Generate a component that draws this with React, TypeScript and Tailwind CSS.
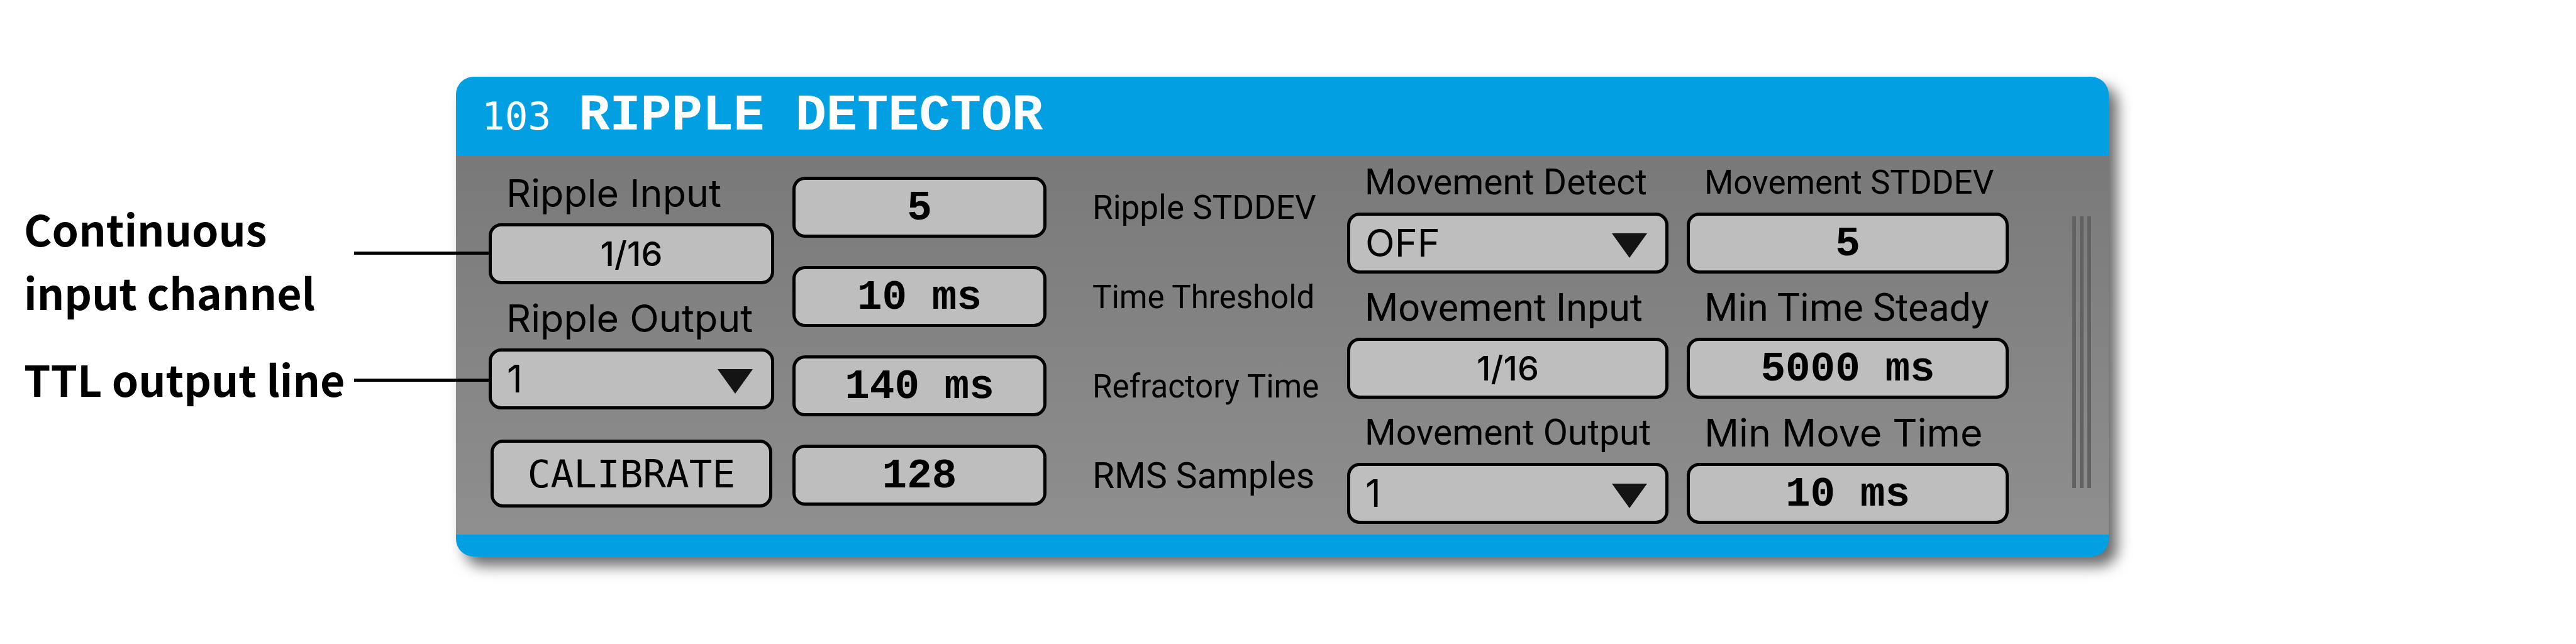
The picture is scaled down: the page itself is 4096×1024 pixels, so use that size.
import type { ReactNode } from 'react';
import { clsx } from 'clsx';

const BOX =
  'block w-full min-w-0 h-[97px] rounded-[20px] border-[5px] border-black bg-[#bebebe] text-black outline-none';
const VALUE_FONT = 'pt-[4px] font-["Liberation_Mono",monospace] font-bold text-[66px] leading-none';

function NumberBox({ id, value }: { id: string; value: string }) {
  return <input id={id} defaultValue={value} className={clsx(BOX, VALUE_FONT, 'text-center')} />;
}

function ChannelButton({ id }: { id: string }) {
  return (
    <button
      id={id}
      type="button"
      className={clsx(BOX, 'text-center font-["Inter",sans-serif] text-[54px] font-medium leading-none')}
    >
      1/16
    </button>
  );
}

function Dropdown({ id, options }: { id: string; options: string[] }) {
  return (
    <div className="relative">
      <select
        id={id}
        className={clsx(BOX, 'appearance-none pl-[24px] font-["Inter",sans-serif] text-[61px] leading-[87px]')}
      >
        {options.map((o) => (
          <option key={o}>{o}</option>
        ))}
      </select>
      <svg
        viewBox="0 0 56 39"
        className="pointer-events-none absolute right-[34px] top-[33px] h-[39px] w-[56px]"
        aria-hidden="true"
      >
        <path d="M0 0H56L28 39Z" fill="#141414" />
      </svg>
    </div>
  );
}

function Field({
  id,
  label,
  labelClass,
  children,
}: {
  id: string;
  label: string;
  labelClass: string;
  children: ReactNode;
}) {
  return (
    <div>
      <label
        htmlFor={id}
        className={clsx('mb-[5px] block h-[86px] whitespace-nowrap pl-[28px] leading-[86px]', labelClass)}
      >
        {label}
      </label>
      {children}
    </div>
  );
}

const REGULAR = 'font-["Inter",sans-serif] text-[61px]';
const NARROW_LG = 'font-["Roboto",sans-serif] text-[61px]';
const NARROW_MD = 'font-["Roboto",sans-serif] text-[57px]';
const NARROW_SM = 'font-["Roboto",sans-serif] text-[53px]';
const NARROW_XS = 'font-["Roboto",sans-serif] text-[51px]';

const DETECTION = [
  { id: 'ripple-std', label: 'Ripple STDDEV', value: '5', size: NARROW_SM },
  { id: 'time-threshold', label: 'Time Threshold', value: '10 ms', size: NARROW_XS },
  { id: 'refractory', label: 'Refractory Time', value: '140 ms', size: NARROW_XS },
  { id: 'rms', label: 'RMS Samples', value: '128', size: NARROW_MD },
];

function Callout({ className, lineClass, children }: { className?: string; lineClass: string; children: ReactNode }) {
  return (
    <div className={clsx('flex items-start', className)}>
      <p className="w-[525px] shrink-0 whitespace-nowrap font-['Noto_Sans_CJK_JP',sans-serif] text-[68px] font-semibold leading-[101px]">
        {children}
      </p>
      <span className={clsx('relative z-10 -mr-[52px] h-[5px] flex-1 bg-black', lineClass)} />
    </div>
  );
}

export default function App() {
  return (
    <main className="grid grid-cols-[725fr_2628fr_743fr] bg-white pb-[139px] pt-[122px] text-black">
      <aside className="pl-[38px] pt-[190px]">
        <Callout lineClass="mt-[88px]">
          Continuous
          <br />
          input channel
        </Callout>
        <Callout className="mt-[37px]" lineClass="mt-[51px]">
          TTL output line
        </Callout>
      </aside>

      <section className="rounded-[28px] bg-[#02a0e3] shadow-[14px_15px_22px_rgba(0,0,0,0.58)]">
        <header className="flex h-[125px] items-baseline gap-[44px] pl-[41px] leading-[125px] text-white">
          <span className="font-['DejaVu_Sans_Mono',monospace] text-[61px]">103</span>
          <h1 className="font-['Liberation_Mono',monospace] text-[82px] font-bold">RIPPLE DETECTOR</h1>
        </header>

        <div className="grid grid-cols-[454fr_404fr_420fr_511fr_512fr_102fr] gap-x-[29px] bg-linear-to-b from-[#797979] to-[#8f8f8f] pb-[17px] pl-[52px] pr-[28px]">
          <div className="flex flex-col gap-[11px] pt-[17px]">
            <Field id="ripple-in" label="Ripple Input" labelClass={REGULAR}>
              <ChannelButton id="ripple-in" />
            </Field>
            <Field id="ripple-out" label="Ripple Output" labelClass={REGULAR}>
              <Dropdown id="ripple-out" options={['1', '2', '3', '4']} />
            </Field>
            <button
              type="button"
              className="mx-[3px] mt-[37px] h-[108px] rounded-[20px] border-[5px] border-black bg-[#bebebe] font-['DejaVu_Sans_Mono',monospace] text-[61px] leading-none"
            >
              CALIBRATE
            </button>
          </div>

          <div className="flex flex-col gap-[45px] pt-[34px]">
            {DETECTION.map((d) => (
              <NumberBox key={d.id} id={d.id} value={d.value} />
            ))}
          </div>

          <div className="flex flex-col gap-[45px] pl-[44px] pt-[35px]">
            {DETECTION.map((d) => (
              <label
                key={d.id}
                htmlFor={d.id}
                className={clsx('block h-[97px] whitespace-nowrap leading-[97px]', d.size)}
              >
                {d.label}
              </label>
            ))}
          </div>

          <div className="flex flex-col gap-[11px]">
            <Field id="move-detect" label="Movement Detect" labelClass={NARROW_MD}>
              <Dropdown id="move-detect" options={['OFF', 'ON']} />
            </Field>
            <Field id="move-in" label="Movement Input" labelClass={NARROW_LG}>
              <ChannelButton id="move-in" />
            </Field>
            <Field id="move-out" label="Movement Output" labelClass={NARROW_MD}>
              <Dropdown id="move-out" options={['1', '2', '3', '4']} />
            </Field>
          </div>

          <div className="flex flex-col gap-[11px]">
            <Field id="move-std" label="Movement STDDEV" labelClass={NARROW_SM}>
              <NumberBox id="move-std" value="5" />
            </Field>
            <Field id="min-steady" label="Min Time Steady" labelClass={NARROW_LG}>
              <NumberBox id="min-steady" value="5000 ms" />
            </Field>
            <Field id="min-move" label="Min Move Time" labelClass={REGULAR}>
              <NumberBox id="min-move" value="10 ms" />
            </Field>
          </div>

          <div className="mt-[97px] flex h-[432px] justify-end gap-[6px]">
            <span className="w-[6px] bg-[#626262]" />
            <span className="w-[6px] bg-[#626262]" />
            <span className="w-[6px] bg-[#626262]" />
          </div>
        </div>

        <footer className="h-[35px]" />
      </section>
    </main>
  );
}
